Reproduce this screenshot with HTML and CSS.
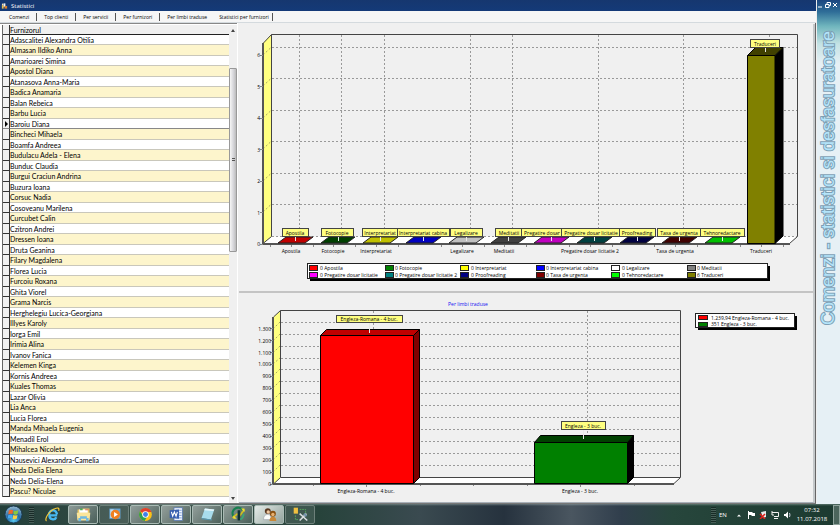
FILE: index.html
```html
<!DOCTYPE html>
<html lang="ro">
<head>
<meta charset="utf-8">
<title>Statistici</title>
<link rel="stylesheet" href="styles.css">
</head>
<body>
<div class="desktop">
  <main class="window">
    <section class="client">
      <header class="titlebar">
        <svg class="app-icon" viewBox="0 0 8 8" aria-hidden="true"><rect x="1" y="3" width="2" height="4" fill="#e8c050"/><circle cx="2" cy="2" r="1" fill="#f0e0c0"/><rect x="3" y="1" width="2" height="4" fill="#f4f4f4"/><rect x="4" y="4" width="3" height="3" fill="#d88030"/></svg>
        <h1>Statistici</h1>
      </header>
      <nav class="tabs">
        <button>Comenzi</button>
        <button>Top clienti</button>
        <button>Per servicii</button>
        <button>Per furnizori</button>
        <button>Per limbi traduse</button>
        <button class="active">Statistici per furnizori</button>
      </nav>
      <div class="page">
        <div class="list">
          <table class="grid">
            <thead><tr><th class="mark"></th><th>Furnizorul</th></tr></thead>
            <tbody>
              <tr><td class="mark"></td><td>Adascalitei Alexandra Otilia</td></tr>
              <tr><td class="mark"></td><td>Almasan Ildiko Anna</td></tr>
              <tr><td class="mark"></td><td>Amarioarei Simina</td></tr>
              <tr><td class="mark"></td><td>Apostol Diana</td></tr>
              <tr><td class="mark"></td><td>Atanasova Anna-Maria</td></tr>
              <tr><td class="mark"></td><td>Badica Anamaria</td></tr>
              <tr><td class="mark"></td><td>Balan Rebeica</td></tr>
              <tr><td class="mark"></td><td>Barbu Lucia</td></tr>
              <tr class="current"><td class="mark"></td><td>Baroiu Diana</td></tr>
              <tr><td class="mark"></td><td>Bincheci Mihaela</td></tr>
              <tr><td class="mark"></td><td>Boamfa Andreea</td></tr>
              <tr><td class="mark"></td><td>Budulacu Adela - Elena</td></tr>
              <tr><td class="mark"></td><td>Bunduc Claudia</td></tr>
              <tr><td class="mark"></td><td>Burgui Craciun Andrina</td></tr>
              <tr><td class="mark"></td><td>Buzura Ioana</td></tr>
              <tr><td class="mark"></td><td>Corsuc Nadia</td></tr>
              <tr><td class="mark"></td><td>Cosoveanu Marilena</td></tr>
              <tr><td class="mark"></td><td>Curcubet Calin</td></tr>
              <tr><td class="mark"></td><td>Czitron Andrei</td></tr>
              <tr><td class="mark"></td><td>Dressen Ioana</td></tr>
              <tr><td class="mark"></td><td>Druta Geanina</td></tr>
              <tr><td class="mark"></td><td>Filary Magdalena</td></tr>
              <tr><td class="mark"></td><td>Florea Lucia</td></tr>
              <tr><td class="mark"></td><td>Furcoiu Roxana</td></tr>
              <tr><td class="mark"></td><td>Ghita Viorel</td></tr>
              <tr><td class="mark"></td><td>Grama Narcis</td></tr>
              <tr><td class="mark"></td><td>Herghelegiu Lucica-Georgiana</td></tr>
              <tr><td class="mark"></td><td>Illyes Karoly</td></tr>
              <tr><td class="mark"></td><td>Iorga Emil</td></tr>
              <tr><td class="mark"></td><td>Irimia Alina</td></tr>
              <tr><td class="mark"></td><td>Ivanov Fanica</td></tr>
              <tr><td class="mark"></td><td>Kelemen Kinga</td></tr>
              <tr><td class="mark"></td><td>Kornis Andreea</td></tr>
              <tr><td class="mark"></td><td>Kuales Thomas</td></tr>
              <tr><td class="mark"></td><td>Lazar Olivia</td></tr>
              <tr><td class="mark"></td><td>Lia Anca</td></tr>
              <tr><td class="mark"></td><td>Lucia Florea</td></tr>
              <tr><td class="mark"></td><td>Manda Mihaela Eugenia</td></tr>
              <tr><td class="mark"></td><td>Menadil Erol</td></tr>
              <tr><td class="mark"></td><td>Mihalcea Nicoleta</td></tr>
              <tr><td class="mark"></td><td>Nausevici Alexandra-Camelia</td></tr>
              <tr><td class="mark"></td><td>Neda Delia Elena</td></tr>
              <tr><td class="mark"></td><td>Neda Delia-Elena</td></tr>
              <tr><td class="mark"></td><td>Pascu? Niculae</td></tr>
            </tbody>
          </table>
          <div class="scroll">
            <button class="arrow" aria-label="Sus"><svg viewBox="0 0 4 3"><path d="M0 3 L2 0 L4 3Z"/></svg></button>
            <div class="track"><div class="thumb"><i></i><i></i></div></div>
            <button class="arrow" aria-label="Jos"><svg viewBox="0 0 4 3"><path d="M0 0 L2 3 L4 0Z"/></svg></button>
          </div>
        </div>
        <div class="charts">
          <div class="chart top">
            <svg viewBox="239 24 574 267" role="img" aria-label="Statistici per furnizori">
              <path class="floor" d="M263 243.5 L271 236.5 H797 L789 243.5Z"/>
              <path class="wall" d="M263 43 L271.5 34.5 V236.5 L263 244Z"/>
              <path class="dash" d="M272 47.5H797M272 78.5H797M272 110.5H797M272 141.5H797M272 173.5H797M272 204.5H797M272 236.5H797"/>
              <path class="dash" d="M299.5 35V236M341.5 35V236M384.5 35V236M470.5 35V236M512.5 35V236M598.5 35V236M683.5 35V236M769.5 35V236"/>
              <path class="dash diag" d="M263 55L271 47.5M263 86L271 78.5M263 118L271 110.5M263 149L271 141.5M263 181L271 173.5M263 212L271 204.5"/>
              <path class="line" d="M263 43.5L271.5 34.5H797.5V236.5L789.5 243.5M271.5 34.5V236.5L263 243.5"/>
              <path class="axis" d="M263 43V244H790"/>
              <path class="tick" d="M260 55.5h3M260 86.5h3M260 118.5h3M260 149.5h3M260 181.5h3M260 212.5h3M260 244.5h3M270.5 245v2M313.5 245v2M355.5 245v2M398.5 245v2M441.5 245v2M484.5 245v2M526.5 245v2M569.5 245v2M612.5 245v2M654.5 245v2M697.5 245v2M740.5 245v2M783.5 245v2M291.5 245v2M333.5 245v2M376.5 245v2M462.5 245v2M504.5 245v2M590.5 245v2M675.5 245v2M761.5 245v2"/>
              <g class="flat">
                <path fill="#c00000" d="M278 243L286 237H313L305 243Z"/>
                <path fill="#004000" d="M321 243L329 237H355L347 243Z"/>
                <path fill="#c0c000" d="M363 243L371 237H398L390 243Z"/>
                <path fill="#0000c0" d="M406 243L414 237H441L433 243Z"/>
                <path fill="#c0c0c0" d="M449 243L457 237H484L476 243Z"/>
                <path fill="#404040" d="M491 243L499 237H526L518 243Z"/>
                <path fill="#c000c0" d="M534 243L542 237H569L561 243Z"/>
                <path fill="#004040" d="M577 243L585 237H612L604 243Z"/>
                <path fill="#000040" d="M620 243L628 237H654L646 243Z"/>
                <path fill="#400000" d="M662 243L670 237H697L689 243Z"/>
                <path fill="#00c000" d="M705 243L713 237H740L732 243Z"/>
              </g>
              <g class="bar">
                <path fill="#000000" d="M775 55.500L783 47.500V236L775 243.500Z"/>
                <path fill="#404000" d="M747.500 55.500L755.500 47.500H783L775 55.500Z"/>
                <path fill="#808000" d="M747.500 55.500H775V243.500H747.500Z"/>
              </g>
              <path class="stem" d="M295.500 236v5M338.500 236v5M380.500 236v5M423.500 236v5M466.500 236v5M508.500 236v5M551.500 236v5M594.500 236v5M637.500 236v5M679.500 236v5M722.500 236v5M765.500 47v5"/>
              <g class="tag">
                <rect x="282.500" y="228.500" width="26" height="8"/><text x="295" y="235">Apostila</text>
                <rect x="321.500" y="228.500" width="32" height="8"/><text x="337" y="235">Fotocopie</text>
                <rect x="362.500" y="228.500" width="36" height="8"/><text x="380" y="235">Interpretariat</text>
                <rect x="397.500" y="228.500" width="52" height="8"/><text x="423" y="235">Interpretariat cabina</text>
                <rect x="450.500" y="228.500" width="32" height="8"/><text x="466" y="235">Legalizare</text>
                <rect x="495.500" y="228.500" width="26" height="8"/><text x="509" y="235">Meditatii</text>
                <rect x="521.500" y="228.500" width="60" height="8"/><text x="542" y="235">Pregatire dosar</text>
                <rect x="561.500" y="228.500" width="65" height="8"/><text x="591" y="235">Pregatire dosar licitatie</text>
                <rect x="619.500" y="228.500" width="36" height="8"/><text x="637" y="235">Proofreading</text>
                <rect x="657.500" y="228.500" width="43" height="8"/><text x="679" y="235">Taxa de urgenta</text>
                <rect x="700.500" y="228.500" width="44" height="8"/><text x="722" y="235">Tehnoredactare</text>
                <rect x="750.500" y="39.500" width="29" height="8"/><text x="765" y="46">Traduceri</text>
              </g>
              <g class="num">
                <text x="260" y="57">6</text><text x="260" y="89">5</text><text x="260" y="120">4</text><text x="260" y="152">3</text><text x="260" y="183">2</text><text x="260" y="215">1</text><text x="260" y="246">0</text>
              </g>
              <g class="cat">
                <text x="291" y="253">Apostila</text><text x="333" y="253">Fotocopie</text><text x="376" y="253">Interpretariat</text><text x="462" y="253">Legalizare</text><text x="504" y="253">Meditatii</text><text x="590" y="253">Pregatire dosar licitatie 2</text><text x="675" y="253">Taxa de urgenta</text><text x="761" y="253">Traduceri</text>
              </g>
              <rect x="310" y="266" width="460" height="15"/>
              <rect class="box" x="307.500" y="263.500" width="460" height="15"/>
              <g class="key">
                <rect fill="#ff0000" x="309.500" y="265.500" width="8" height="5"/><text x="320" y="270">0 Apostila</text>
                <rect fill="#008000" x="385.500" y="265.500" width="8" height="5"/><text x="395" y="270">0 Fotocopie</text>
                <rect fill="#ffff00" x="460.500" y="265.500" width="8" height="5"/><text x="471" y="270">0 Interpretariat</text>
                <rect fill="#0000ff" x="536.500" y="265.500" width="8" height="5"/><text x="546" y="270">0 Interpretariat cabina</text>
                <rect fill="#ffffff" x="611.500" y="265.500" width="8" height="5"/><text x="622" y="270">0 Legalizare</text>
                <rect fill="#808080" x="687.500" y="265.500" width="8" height="5"/><text x="697" y="270">0 Meditatii</text>
                <rect fill="#ff00ff" x="309.500" y="272.500" width="8" height="5"/><text x="320" y="277">0 Pregatire dosar licitatie</text>
                <rect fill="#008080" x="385.500" y="272.500" width="8" height="5"/><text x="395" y="277">0 Pregatire dosar licitatie 2</text>
                <rect fill="#000080" x="460.500" y="272.500" width="8" height="5"/><text x="471" y="277">0 Proofreading</text>
                <rect fill="#800000" x="536.500" y="272.500" width="8" height="5"/><text x="546" y="277">0 Taxa de urgenta</text>
                <rect fill="#00ff00" x="611.500" y="272.500" width="8" height="5"/><text x="622" y="277">0 Tehnoredactare</text>
                <rect fill="#808000" x="687.500" y="272.500" width="8" height="5"/><text x="697" y="277">6 Traduceri</text>
              </g>
            </svg>
          </div>
          <div class="chart bottom">
            <svg viewBox="239 293 574 209" role="img" aria-label="Per limbi traduse">
              <text class="heading" x="468" y="306">Per limbi traduse</text>
              <path class="floor" d="M273 483.500L280 477.500H680L674 483.500Z"/>
              <path class="wall" d="M273.500 317L280.500 310.500V477.500L273.500 484Z"/>
              <path class="dash" d="M281 322.500H680M281 334.500H680M281 346.500H680M281 358.500H680M281 369.500H680M281 381.500H680M281 393.500H680M281 405.500H680M281 417.500H680M281 429.500H680M281 441.500H680M281 453.500H680M281 465.500H680M373.500 311V477M587.500 311V477"/>
              <path class="dash diag" d="M273 329L280 322M273 341L280 334M273 353L280 346M273 364L280 358M273 376L280 369M273 388L280 381M273 400L280 393M273 412L280 405M273 424L280 417M273 436L280 429M273 448L280 441M273 460L280 453M273 472L280 465"/>
              <path class="line" d="M273.500 317L280.500 310.500H680.500V477.500L674 483.500M280.500 310.500V477.500L273.500 484M281 477.500H680"/>
              <path class="axis" d="M273 317V484H674"/>
              <path class="tick" d="M270 328.500h3M270 340.500h3M270 352.500h3M270 364.500h3M270 376.500h3M270 388.500h3M270 400.500h3M270 412.500h3M270 424.500h3M270 436.500h3M270 448.500h3M270 460.500h3M270 472.500h3M270 484.500h3M313.500 485v1M366.500 485v2M420.500 485v1M473.500 485v1M527.500 485v1M580.500 485v2M634.500 485v1"/>
              <g class="bar">
                <path fill="#800000" d="M413.500 335.500L419.500 329.500V477.500L413.500 483.500Z"/>
                <path fill="#c00000" d="M320.500 335.500L326.500 329.500H419.500L413.500 335.500Z"/>
                <path fill="#ff0000" d="M320.500 335.500H413.500V483.500H320.500Z"/>
                <path fill="#000000" d="M627.500 442.500L633.500 435.500V477.500L627.500 483.500Z"/>
                <path fill="#004000" d="M534.500 442.500L540.500 435.500H633.500L627.500 442.500Z"/>
                <path fill="#008000" d="M534.500 442.500H627.500V483.500H534.500Z"/>
              </g>
              <path class="stem" d="M369.500 323V333M583.500 430V439"/>
              <g class="tag">
                <rect x="336.500" y="315.500" width="66" height="7"/><text x="369" y="321">Engleza-Romana - 4 buc.</text>
                <rect x="561.500" y="421.500" width="44" height="8"/><text x="583" y="428">Engleza - 3 buc.</text>
              </g>
              <g class="num">
                <text x="271" y="331">1.300</text><text x="271" y="343">1.200</text><text x="271" y="355">1.100</text><text x="271" y="366">1.000</text><text x="271" y="378">900</text><text x="271" y="390">800</text><text x="271" y="402">700</text><text x="271" y="414">600</text><text x="271" y="426">500</text><text x="271" y="438">400</text><text x="271" y="450">300</text><text x="271" y="462">200</text><text x="271" y="474">100</text><text x="271" y="486">0</text>
              </g>
              <g class="cat">
                <text x="366" y="493">Engleza-Romana - 4 buc.</text><text x="580" y="493">Engleza - 3 buc.</text>
              </g>
              <rect x="698" y="316" width="99" height="14"/>
              <rect class="box" x="695.500" y="313.500" width="99" height="14"/>
              <g class="key">
                <rect fill="#ff0000" x="698.500" y="315.500" width="9" height="4"/><text x="711" y="320">1.239,94 Engleza-Romana - 4 buc.</text>
                <rect fill="#008000" x="698.500" y="322.500" width="9" height="4"/><text x="711" y="326">351 Engleza - 3 buc.</text>
              </g>
            </svg>
          </div>
        </div>
      </div>
    </section>
    <aside class="banner">
      <div class="winctl">
        <button aria-label="Minimizare"><svg viewBox="0 0 6 6"><path d="M1 5H5"/></svg></button>
        <button aria-label="Restaurare"><svg viewBox="0 0 6 6"><path d="M2 2V.5H5.500V3.500H4M.5 2.500H4V5.500H.5Z"/></svg></button>
        <button aria-label="Inchidere"><svg viewBox="0 0 6 6"><path d="M1 1L5 5M5 1L1 5"/></svg></button>
      </div>
      <p>Comenzi - statistici si desfasuratoare</p>
    </aside>
  </main>
  <footer class="taskbar">
    <button class="start" aria-label="Start"><svg viewBox="0 0 20 20"><defs><radialGradient id="orb" cx=".5" cy=".85" r=".8"><stop offset="0" stop-color="#58c8f0"/><stop offset=".5" stop-color="#2468a0"/><stop offset="1" stop-color="#8fb4cc"/></radialGradient></defs><circle cx="10" cy="10" r="9" fill="url(#orb)" stroke="#183850"/><path fill="#f06828" d="M5 6Q7 4.500 9.500 5.500L9 9.500Q7 8.500 4.500 10Z"/><path fill="#8cc83c" d="M10.300 5.800Q12.500 7 15 5.600L14.300 9.600Q12 10.800 9.800 9.600Z"/><path fill="#48a8f0" d="M4.400 10.800Q6.500 9.300 8.900 10.300L8.300 14.200Q6 13.200 3.800 14.500Z"/><path fill="#fcd040" d="M9.700 10.500Q12 11.600 14.200 10.400L13.500 14.300Q11.500 15.500 9.100 14.400Z"/></svg></button>
    <span class="grip"></span>
    <button class="task plain" aria-label="Internet Explorer"><svg viewBox="0 0 20 20"><path d="M15.500 11H6.500A4.200 4.200 0 0 0 14.500 13.200M6 9.800A4.600 4.600 0 0 1 15.200 9.800" fill="none" stroke="#48b8f0" stroke-width="2.800"/><path d="M3 17.500C0 16 6 5.500 12.500 3.200C16 1.800 18.500 2 17.200 5.500" fill="none" stroke="#f4c838" stroke-width="1.400"/></svg></button>
    <button class="task" aria-label="Explorer"><svg viewBox="0 0 20 20"><path fill="#e8c868" d="M3 4H8L9 3H17V16H3Z"/><path fill="#fff" d="M5 4H15V8H5Z"/><path fill="#4caf50" d="M6 3H9V5H6Z"/><path fill="#d05040" d="M12 4H16V5H12Z"/><path fill="#fbe59a" d="M2 8H18L17 17H3Z"/><path fill="#70b8e0" d="M6 12H14V14H16V18H13V15H7V18H4V14H6Z"/></svg></button>
    <button class="task dim" aria-label="Media Player"><svg viewBox="0 0 20 20"><path fill="#68a8d8" d="M4 3H17V15H4Z"/><path fill="#c4e0f4" d="M5 4H9V14H5Z"/><circle cx="11" cy="10" r="5.500" fill="#f08020"/><path fill="#fff" d="M9.500 7L14 10L9.500 13Z"/></svg></button>
    <button class="task" aria-label="Chrome"><svg viewBox="0 0 20 20"><circle cx="10" cy="10" r="7.500" fill="#fbc116"/><path fill="#e04030" d="M10 10L3.500 6.200A7.500 7.500 0 0 1 16.500 6.200L17 7H10Z"/><path fill="#30a050" d="M3.500 6.200A7.500 7.500 0 0 0 9 17.500L12.500 11.500L7.500 12Z"/><circle cx="10" cy="10" r="3.800" fill="#fff"/><circle cx="10" cy="10" r="2.900" fill="#4080e8"/></svg></button>
    <button class="task" aria-label="Word"><svg viewBox="0 0 20 20"><path fill="#f4f8ff" stroke="#5878b0" d="M7 2H17V17H7Z"/><path stroke="#6a90d0" d="M9 5H16M9 8H16M9 11H16M9 14H16"/><path fill="#3860b0" d="M2 5L13 4V15L2 14Z"/><path fill="none" stroke="#fff" stroke-width="1.300" d="M4 7L5.500 12L7.500 7L9.500 12L11 7"/></svg></button>
    <button class="task" aria-label="Notepad"><svg viewBox="0 0 20 20"><path fill="#a8dcec" d="M7 3L18 4L14 16L3 14Z"/><path fill="#e8f8fc" d="M7 3L18 4L17 6L6 5Z"/><path fill="#5898b0" d="M3 14L14 16L15 14V17L3 15.500Z"/></svg></button>
    <button class="task" aria-label="Service"><svg viewBox="0 0 20 20"><path fill="none" stroke="#188050" stroke-width="2.500" d="M4 12A6 6 0 0 1 15 5"/><path fill="none" stroke="#d0c020" stroke-width="2" d="M3 14L9 9M11 12L17 4"/><path fill="#f0e038" d="M13 3H17V7ZM4 11V15H8Z"/><path fill="#103030" d="M9 5H12V17H9Z"/><path fill="none" stroke="#38a878" stroke-width="2" d="M16 9Q16 14 12 16"/></svg></button>
    <button class="task active" aria-label="Comenzi"><svg viewBox="0 0 20 20"><circle cx="8" cy="6" r="3.500" fill="#5a3820"/><circle cx="8.500" cy="7" r="2" fill="#f0c8a0"/><path fill="#fafcfa" stroke="#889" stroke-width=".5" d="M3 16Q3 10 8 10Q12 10 12 16Z"/><circle cx="14" cy="9" r="3.500" fill="#8a5010"/><circle cx="14" cy="10" r="2" fill="#e8b070"/><path fill="#c88838" d="M10 17.500Q10 12.500 14 12.500Q18 12.500 18 17.500Z"/></svg></button>
    <button class="task dim" aria-label="Instrumente"><svg viewBox="0 0 20 20"><path fill="#f0c040" d="M2 2H7V9H2Z"/><path fill="none" stroke="#58b060" stroke-dasharray="2 1" d="M9 4H16V8M4 11V16H8"/><path stroke="#d8dce0" stroke-width="1.800" d="M9 9L18 17M17 9L9 17"/><path stroke="#7090a8" stroke-width="2.500" d="M14 9L17 12"/></svg></button>
    <span class="grip tray"></span>
    <span class="lang">EN</span>
    <div class="icons">
      <svg viewBox="0 0 8 8"><path fill="#fff" d="M2 5.500L4 3.500L6 5.500Z"/></svg>
      <svg viewBox="0 0 8 8"><path fill="#fff" d="M1 0H2V8H1ZM2 1H5L6 2H8V5H5L4 4H2Z"/></svg>
      <svg viewBox="0 0 8 8"><path fill="#e8e8e8" d="M2 1L7 0V6L4 7Z"/><path stroke="#e02018" stroke-width="1.500" d="M1 3L6 8M6 3L1 8"/></svg>
      <svg viewBox="0 0 8 8"><path fill="none" stroke="#f0f0f0" d="M1 1.500H7.500V5.500H3M1 0V4H3M3 7.500H7"/></svg>
      <svg viewBox="0 0 8 8"><path fill="#fff" d="M1 3H2.500L5 .5V7.500L2.500 5H1Z"/><path fill="none" stroke="#ccd" d="M6.500 2Q7.500 4 6.500 6"/></svg>
    </div>
    <time>07:32<br>11.07.2018</time>
    <button class="peek" aria-label="Desktop"></button>
  </footer>
</div>
</body>
</html>
```
FILE: styles.css
```css
* { box-sizing: border-box; }
body { margin: 0; font: 5px/6px "Open Sans", "Noto Sans", sans-serif; color: #000; }
button { font: inherit; color: inherit; border: 0; padding: 0; margin: 0; background: none; }
svg { display: block; }

.desktop { display: flex; flex-direction: column; height: 100vh; overflow: hidden; background: #f0f0f0; }
.window { flex: 1; min-height: 0; display: flex; }
.client { flex: 1; min-width: 0; display: flex; flex-direction: column; border-bottom: 1px solid #777; }

.titlebar { height: 11px; flex: none; display: flex; align-items: center; gap: 3px; padding-left: 1px; background: linear-gradient(#16376f, #143a78); color: #fff; }
.titlebar h1 { margin: 0; font: 6px/8px "Open Sans", sans-serif; }
.app-icon { width: 7px; height: 8px; }

.tabs { height: 12px; flex: none; display: flex; align-items: center; padding-left: 2px; background: #f6f6f6; border-bottom: 1px solid #d4dade; }
.tabs button { padding: 0 7px; height: 8px; line-height: 8px; border-right: 1px solid #555; }
.tabs button:nth-child(5) { border: 0; }
.tabs .active { padding: 0 3px 0 5px; }

.page { flex: 1; min-height: 0; display: flex; }
.list { width: 237px; flex: none; display: flex; align-items: flex-start; padding: 1px 0 0 2px; background: #fff; border-top: 1px solid #888; }
.grid { flex: 1; border-collapse: separate; border-spacing: 0; border-left: 1px solid #666; font: 7px/8px Lato, "Liberation Sans", sans-serif; table-layout: fixed; }
.grid th, .grid td { padding: 0; height: 10px; text-align: left; font-weight: 400; white-space: nowrap; border-bottom: 1px solid #c9c7bb; }
.grid tr:nth-child(even) td { height: 11px; background: #fdf5cc; }
.grid th { background: #f0f0f0; border-bottom-color: #222; }
.grid .mark, .grid tr:nth-child(even) .mark { width: 7px; padding: 0; background: #f0f0f0; border-right: 1px solid #333; border-bottom: 1px solid #333; }
.grid .current td { border-bottom-color: #888; }
.current .mark::before { content: ""; display: block; width: 0; margin-left: 2px; border: 3px solid transparent; border-left-color: #000; border-right: 0; }

.scroll { width: 8px; flex: none; align-self: stretch; display: flex; flex-direction: column; background: #f0f0f0; }
.arrow { height: 10px; display: grid; place-items: center; }
.arrow svg { width: 4px; height: 3px; fill: #444; }
.track { flex: 1; display: grid; grid-template-rows: 33fr 184fr 242fr; }
.thumb { grid-row: 2; border: 1px solid #999; border-radius: 1px; background: linear-gradient(90deg, #f6f6f6, #d4d4d8 60%, #bbb); display: flex; flex-direction: column; gap: 1px; align-items: center; justify-content: center; }
.thumb i { width: 3px; height: 1px; background: #555; }

.charts { flex: 1; min-width: 0; display: flex; flex-direction: column; padding: 1px 0 0 1px; border-right: 1px solid #666; border-left: 1px solid #fff; }
.chart { min-height: 0; border-right: 2px solid #c4c8ca; }
.chart svg { width: 100%; height: 100%; }
.top { flex: 267; border-bottom: 2px solid #c4c4c4; }
.bottom { flex: 209; border-bottom: 1px solid #a8b0b8; }

.floor { fill: #fff; }
.wall { fill: #ffff80; }
.dash { fill: none; stroke: #999; stroke-dasharray: 2 2; }
.diag { stroke: #a8a860; }
.line { fill: none; stroke: #444; }
.axis { fill: none; stroke: #555; stroke-width: 2; }
.tick { stroke: #888; }
.flat path { stroke: #222; stroke-width: 1; }
.bar path { stroke: #000; stroke-linejoin: round; }
.stem { stroke: #e8e8e8; }
.tag rect { fill: #ffff80; stroke: #444; }
.tag text, .cat text { text-anchor: middle; }
.num text { text-anchor: end; }
.box { fill: #fff; stroke: #222; }
.key rect { stroke: #222; }
.heading { fill: #1010f0; text-anchor: middle; }

.banner { width: 24px; flex: none; display: flex; flex-direction: column; border-left: 1px solid #eee; background: linear-gradient(#1b4680, #2f6e98 12px, #6fb5bd 26px, #c4e2e4 44px, #e6f0f5 64px); }
.winctl { height: 10px; display: flex; justify-content: space-between; align-items: center; padding: 0 2px 0 0; }
.winctl svg { width: 6px; height: 6px; fill: none; stroke: #fff; }
.banner p { margin: 21px 0 0; width: 23px; text-align: right; writing-mode: vertical-rl; transform: rotate(180deg); font: 18px/23px "Liberation Sans", sans-serif; color: #b4e4fa; white-space: nowrap; -webkit-text-stroke: 2px #7d9fb4; paint-order: stroke fill; }

.taskbar { height: 21px; flex: none; display: flex; align-items: center; background: linear-gradient(rgba(200, 220, 215, .35), transparent 2px), linear-gradient(90deg, #233f3a, #3b5049 20%, #27433b 38%, #3a4a50 50%, #26323e 60%, #4a5660 68%, #303e4c 74%, #27463c 80%, #1c3a30); color: #fff; }
.start { width: 27px; display: grid; place-items: center; }
.start svg { width: 19px; height: 19px; }
.grip { width: 5px; height: 16px; margin: 0 3px 0 2px; background: repeating-linear-gradient(#101c1a 0 1px, #5d716b 1px 2px); opacity: .6; }
.task { width: 30px; height: 19px; margin-right: 1px; display: grid; place-items: center; border: 1px solid #a9bab4; border-radius: 2px; background: linear-gradient(135deg, rgba(255, 255, 255, .45), rgba(255, 255, 255, .12)); }
.task svg { width: 17px; height: 17px; }
.plain { border-color: transparent; background: none; }
.dim { border-color: #6d807a; background: rgba(255, 255, 255, .1); }
.task.active { background: linear-gradient(135deg, #e4ebe8, #93a39d); }
.tray { margin-left: auto; }
.lang { width: 16px; font-size: 6px; }
.icons { display: flex; gap: 4px; }
.icons svg { width: 8px; height: 8px; }
time { width: 42px; text-align: center; font-size: 6px; line-height: 9px; }
.peek { width: 7px; height: 20px; border: 1px solid #8fa39c; background: #4b655c; }
```
